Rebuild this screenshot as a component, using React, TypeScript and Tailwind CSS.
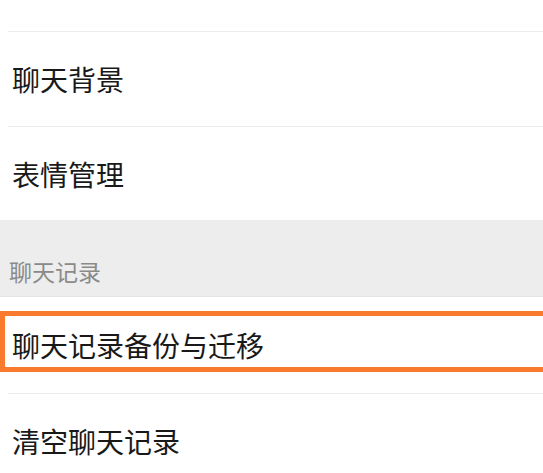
export default function App() {
  const font = { fontFamily: '"Noto Sans CJK SC", "Noto Sans", sans-serif' };

  return (
    <div className="w-[543px] h-[473px] overflow-hidden bg-white text-[#191919]" style={font}>
      {/* top row, cut off */}
      <div className="h-[31px] bg-white" />
      <div className="ml-2 h-px bg-[#ececec]" />

      <div className="h-[94px] flex items-center pl-3 text-[28px] leading-none">聊天背景</div>
      <div className="ml-2 h-px bg-[#ececec]" />

      <div className="h-[93px] flex items-center pl-3 text-[28px] leading-none">表情管理</div>

      {/* section header */}
      <div className="h-[77px] bg-[#ededed] flex items-end pl-[9px] pb-[13px] text-[23px] leading-none text-[#8a8a8a] border-b border-[#e4e4e4]">
        聊天记录
      </div>

      {/* highlighted row */}
      <div className="relative h-[96px] flex items-center pl-3 text-[28px] leading-none">
        聊天记录备份与迁移
        <div className="absolute left-0 -right-2 top-[14px] h-[61px] border-[5px] border-[#f97a2c]" />
      </div>
      <div className="ml-2 h-px bg-[#ececec]" />

      <div className="h-[94px] flex items-center pl-3 text-[28px] leading-none">清空聊天记录</div>
    </div>
  );
}
